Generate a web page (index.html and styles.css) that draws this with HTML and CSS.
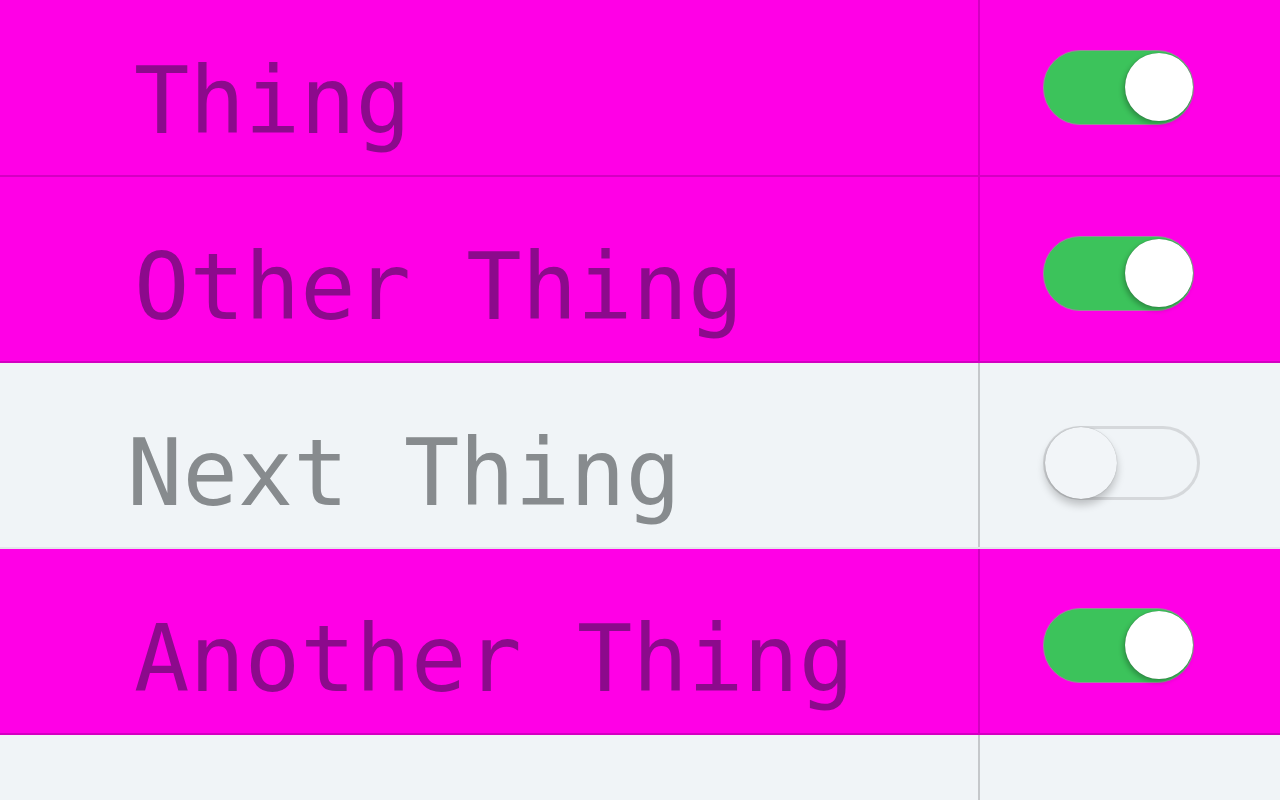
FILE: index.html
```html
<!DOCTYPE html>
<html lang="en">
<head>
<meta charset="utf-8">
<title>Things</title>
<link rel="stylesheet" href="styles.css">
</head>
<body>
<ul class="list">
  <li class="row is-on">
    <span class="label">Thing</span>
    <span class="cell"><span class="switch on"><span class="knob"></span></span></span>
  </li>
  <li class="row is-on">
    <span class="label">Other Thing</span>
    <span class="cell"><span class="switch on"><span class="knob"></span></span></span>
  </li>
  <li class="row">
    <span class="label">Next Thing</span>
    <span class="cell"><span class="switch"><span class="knob"></span></span></span>
  </li>
  <li class="row is-on">
    <span class="label">Another Thing</span>
    <span class="cell"><span class="switch on"><span class="knob"></span></span></span>
  </li>
  <li class="row">
    <span class="label"></span>
    <span class="cell"></span>
  </li>
</ul>
</body>
</html>
```

FILE: styles.css
```css
html, body {
  margin: 0;
  padding: 0;
  height: 100%;
  background: #f0f4f7;
  overflow: hidden;
}

.list {
  list-style: none;
  margin: -9px 0 0 0;
  padding: 0;
}

.row {
  display: grid;
  grid-template-columns: 980px 1fr;
  height: 186px;
  box-sizing: border-box;
  border-bottom: 2px solid #e3e6e9;
  background: #f0f4f7;
  font-family: "DejaVu Sans Mono", "Liberation Mono", monospace;
  font-size: 92px;
  color: #878b8e;
}

.row.is-on {
  background: #ff00e6;
  color: #8c0a8c;
  border-bottom-color: #d400c2;
}

.label {
  display: flex;
  align-items: center;
  padding: 36px 0 0 127px;
  border-right: 2px solid #c5c8cb;
  white-space: pre;
}

.row.is-on .label {
  padding-left: 134px;
  border-right-color: #d400c2;
}

.cell {
  display: flex;
  align-items: center;
  padding: 8px 0 0 63px;
}

.switch {
  position: relative;
  display: block;
  width: 157px;
  height: 74px;
  margin-top: 8px;
  box-sizing: border-box;
  border-radius: 37px;
  border: 3px solid #d5d8db;
  background: #f0f4f7;
}

.switch.on {
  width: 151px;
  height: 75px;
  margin-top: 0;
  border: 1px solid #9a8a9a;
  background: #3cc35b;
}

.knob {
  position: absolute;
  top: -2px;
  left: -1px;
  width: 72px;
  height: 72px;
  border-radius: 50%;
  background: #f2f5f8;
  box-shadow: 0 6px 8px rgba(0, 0, 0, 0.22), 0 0 1px rgba(0, 0, 0, 0.3);
}

.switch.on .knob {
  top: 2px;
  left: auto;
  right: 0;
  width: 68px;
  height: 68px;
  background: #ffffff;
  box-shadow: -2px 3px 5px rgba(0, 0, 0, 0.25), 0 0 1px rgba(0, 0, 0, 0.4);
}
```
